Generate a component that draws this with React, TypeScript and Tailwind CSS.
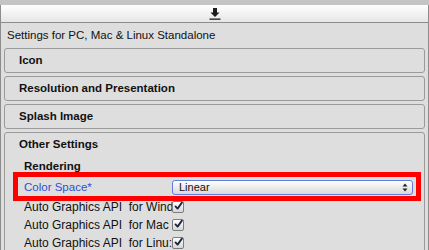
import React from "react";

const font = { fontFamily: '"Liberation Sans", Arial, sans-serif' };

function Foldout({ title }: { title: string }) {
  return (
    <div className="h-[25px] rounded-[3px] border border-[#9a9a9a] bg-[#dedede] flex items-center pl-[14px]">
      <span className="text-[11.5px] font-bold text-[#111]">{title}</span>
    </div>
  );
}

function Check() {
  return (
    <div className="w-[12px] h-[12px] rounded-[2px] border border-[#7d7d7d] bg-gradient-to-b from-[#ffffff] to-[#d6d6d6] flex items-center justify-center">
      <svg width="12" height="12" viewBox="0 0 12 12" className="-mt-[2px] ml-[1px]">
        <path d="M2 6.5 L4.8 9.5 L10.5 1.5" stroke="#1b2638" strokeWidth="2.4" fill="none" strokeLinecap="round" strokeLinejoin="round" />
      </svg>
    </div>
  );
}

function Row({ label }: { label: string }) {
  return (
    <div className="h-[18px] flex items-center">
      <span className="w-[148px] shrink-0 whitespace-pre text-[12px] text-[#111]">{label}</span>
      <Check />
    </div>
  );
}

export default function App() {
  return (
    <div className="relative w-[429px] h-[250px] overflow-hidden bg-[#dedede]" style={font}>
      {/* Window strip */}
      <div className="h-[5px] bg-[#c4c4c4]" />

      {/* Toolbar */}
      <div className="h-[18px] border-l border-r border-b border-[#8c8c8c] bg-gradient-to-b from-[#fefefe] to-[#e6e6e6] flex items-center justify-center">
        <svg width="12" height="13" viewBox="0 0 12 13">
          <path d="M4 1 H8 V5.5 H10.5 L6 10 L1.5 5.5 H4 Z" fill="#1c1c1c" />
          <rect x="0.5" y="11.5" width="11" height="1.3" fill="#1c1c1c" />
        </svg>
      </div>

      {/* Inspector panel */}
      <div className="border-l border-r border-[#8c8c8c] h-[227px] px-[3px]">
        <div className="h-[25px] flex items-center pl-[3px] text-[11.5px] text-[#111]">
          Settings for PC, Mac &amp; Linux Standalone
        </div>

        <div className="flex flex-col gap-[3px]">
          <Foldout title="Icon" />
          <Foldout title="Resolution and Presentation" />
          <Foldout title="Splash Image" />

          {/* Expanded section */}
          <div className="h-[140px] rounded-[3px] border border-[#9a9a9a] bg-[#dedede] pl-[14px]">
            <div className="h-[24px] flex items-center">
              <span className="text-[11.5px] font-bold text-[#111]">Other Settings</span>
            </div>
            <div className="pl-[5px]">
              <div className="h-[20px] flex items-center">
                <span className="text-[11.5px] font-bold text-[#111]">Rendering</span>
              </div>
              <div className="h-[21px] flex items-center">
                <span className="w-[148px] shrink-0 text-[11.5px] text-[#2f4fd6]">Color Space*</span>
                <div className="w-[241px] h-[15px] rounded-[3px] border border-[#5f7ee0] bg-gradient-to-b from-[#ffffff] to-[#d9d9d9] flex items-center justify-between pl-[6px] pr-[4px]">
                  <span className="text-[11px] text-[#111]">Linear</span>
                  <svg width="6" height="9" viewBox="0 0 6 9">
                    <path d="M3 0.5 L5.5 3.5 H0.5 Z" fill="#222" />
                    <path d="M3 8.5 L5.5 5.5 H0.5 Z" fill="#222" />
                  </svg>
                </div>
              </div>
              <Row label="Auto Graphics API  for Wind" />
              <Row label="Auto Graphics API  for Mac" />
              <Row label="Auto Graphics API  for Linu:" />
            </div>
          </div>
        </div>
      </div>

      {/* Highlight annotation */}
      <div className="absolute left-[13px] top-[172px] w-[408px] h-[29px] border-[5px] border-[#ff0000]" />
    </div>
  );
}
